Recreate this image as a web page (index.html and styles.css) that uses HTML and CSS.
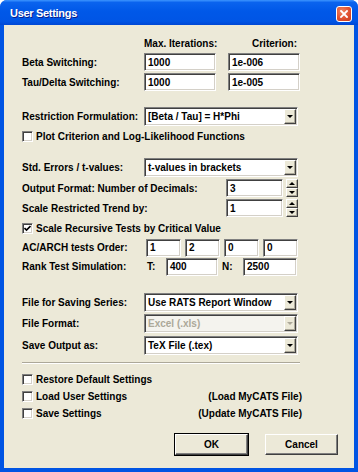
FILE: index.html
```html
<!DOCTYPE html>
<html lang="en">
<head>
    <meta charset="UTF-8">
    <meta name="viewport" content="width=device-width, initial-scale=1.0">
    <title>User Settings</title>
    <link rel="stylesheet" href="styles.css">
</head>
<body>
    <div class="window">
        <div class="titlebar">
            <span class="title">User Settings</span>
            <span class="close">
                <svg width="8" height="8" viewBox="0 0 8 8"><path d="M1 1L7 7M7 1L1 7" stroke="#fff" stroke-width="1.8" stroke-linecap="square"/></svg>
            </span>
        </div>

        <div class="client">
            <div class="row head">
                <span class="label"></span>
                <span class="head-col">Max. Iterations:</span>
                <span class="head-col second">Criterion:</span>
            </div>
            <div class="row">
                <span class="label">Beta Switching:</span>
                <span class="field w72">1000</span>
                <span class="field w72 second">1e-006</span>
            </div>
            <div class="row">
                <span class="label">Tau/Delta Switching:</span>
                <span class="field w72">1000</span>
                <span class="field w72 second">1e-005</span>
            </div>

            <div class="row gap-14">
                <span class="label">Restriction Formulation:</span>
                <span class="combo"><span class="combo-text">[Beta / Tau] = H*Phi</span><span class="combo-btn"><i class="arrow-down"></i></span></span>
            </div>
            <div class="row">
                <span class="check"></span>
                <span>Plot Criterion and Log-Likelihood Functions</span>
            </div>

            <div class="row gap-11">
                <span class="label">Std. Errors / t-values:</span>
                <span class="combo"><span class="combo-text">t-values in brackets</span><span class="combo-btn"><i class="arrow-down"></i></span></span>
            </div>
            <div class="row gap-1">
                <span class="label wide">Output Format: Number of Decimals:</span>
                <span class="field w57">3</span>
                <span class="spin"><span class="spin-btn"><i class="arrow-up"></i></span><span class="spin-btn"><i class="arrow-down"></i></span></span>
            </div>
            <div class="row">
                <span class="label wide">Scale Restricted Trend by:</span>
                <span class="field w57">1</span>
                <span class="spin"><span class="spin-btn"><i class="arrow-up"></i></span><span class="spin-btn"><i class="arrow-down"></i></span></span>
            </div>
            <div class="row short gap-1">
                <span class="check checked">
                    <svg width="7" height="7" viewBox="0 0 7 7"><path d="M0.5 3L2.5 5L6.5 1" fill="none" stroke="#000" stroke-width="1.6"/></svg>
                </span>
                <span>Scale Recursive Tests by Critical Value</span>
            </div>
            <div class="row short">
                <span class="label ac">AC/ARCH tests Order:</span>
                <span class="order">
                    <span class="field w35">1</span>
                    <span class="field w35">2</span>
                    <span class="field w35">0</span>
                    <span class="field w35">0</span>
                </span>
            </div>
            <div class="row short">
                <span class="label rank">Rank Test Simulation:</span>
                <span class="sim-t">T:</span>
                <span class="field w52">400</span>
                <span class="sim-n">N:</span>
                <span class="field w54">2500</span>
            </div>

            <div class="row gap-16">
                <span class="label">File for Saving Series:</span>
                <span class="combo"><span class="combo-text">Use RATS Report Window</span><span class="combo-btn"><i class="arrow-down"></i></span></span>
            </div>
            <div class="row gap-1">
                <span class="label">File Format:</span>
                <span class="combo disabled"><span class="combo-text">Excel (.xls)</span><span class="combo-btn"><i class="arrow-down"></i></span></span>
            </div>
            <div class="row gap-2">
                <span class="label">Save Output as:</span>
                <span class="combo"><span class="combo-text">TeX File (.tex)</span><span class="combo-btn"><i class="arrow-down"></i></span></span>
            </div>

            <div class="separator"></div>

            <div class="row option first">
                <span class="check"></span>
                <span>Restore Default Settings</span>
            </div>
            <div class="row option">
                <span class="check"></span>
                <span>Load User Settings</span>
                <span class="aside">(Load MyCATS File)</span>
            </div>
            <div class="row option">
                <span class="check"></span>
                <span>Save Settings</span>
                <span class="aside">(Update MyCATS File)</span>
            </div>

            <div class="buttons">
                <span class="button default">OK</span>
                <span class="button">Cancel</span>
            </div>
        </div>
    </div>
</body>
</html>
```

FILE: styles.css
```css
body {
    margin: 0;
    background: #fff;
    font-family: "Liberation Sans", Arial, sans-serif;
    font-size: 10px;
    font-weight: bold;
    color: #000;
}
.window {
    width: 358px;
    height: 472px;
    box-sizing: border-box;
    display: flex;
    flex-direction: column;
    background: #0054e3;
    border-radius: 7px 7px 0 0;
    overflow: hidden;
}
.titlebar {
    height: 25px;
    flex: none;
    display: flex;
    align-items: center;
    justify-content: space-between;
    padding: 0 6px 0 10px;
    background: linear-gradient(to bottom, #3d95ff 0%, #0a63ee 10%, #0058e8 45%, #0055e5 85%, #0048d4 100%);
}
.title {
    color: #fff;
    font-size: 11px;
    letter-spacing: -0.3px;
    text-shadow: 1px 1px #0a1e8c;
}
.close {
    width: 14px;
    height: 14px;
    margin-top: 2px;
    display: flex;
    align-items: center;
    justify-content: center;
    border: 1px solid #fff;
    border-radius: 3px;
    background: radial-gradient(circle at 35% 30%, #f0845f 0%, #e0502f 55%, #c53a1c 100%);
}
.client {
    flex: 1;
    margin: 0 4px 4px;
    padding: 10px 0 0 18px;
    background: #ece9d8;
}
.row {
    display: flex;
    align-items: center;
    height: 20px;
    white-space: nowrap;
}
.row.short {
    height: 19px;
}
.row.head {
    height: 16px;
    margin-bottom: 1px;
}
.gap-1 { margin-top: 1px; }
.gap-2 { margin-top: 2px; }
.gap-11 { margin-top: 11px; }
.gap-14 { margin-top: 14px; }
.gap-16 { margin-top: 16px; }

.label {
    width: 122px;
    flex: none;
}
.label.wide { width: 204px; }
.label.ac { width: 124px; }
.label.rank { width: 125px; }

.head-col {
    width: 72px;
    box-sizing: border-box;
    padding-right: 3px;
    text-align: right;
}
.second {
    margin-left: 12px;
}

.field {
    height: 18px;
    box-sizing: border-box;
    display: flex;
    align-items: center;
    padding: 0 3px;
    background: #fff;
    border: 1px solid;
    border-color: #808080 #fff #fff #808080;
    box-shadow: inset 1px 1px #404040, inset -1px -1px #d4d0c8;
}
.w72 { width: 72px; }
.w57 { width: 57px; }
.w35 { width: 35px; }
.w52 { width: 52px; }
.w54 { width: 54px; }

.order {
    display: flex;
    gap: 4px;
}
.sim-t {
    width: 19px;
}
.sim-n {
    width: 21px;
    margin-left: 4px;
}

.combo {
    width: 154px;
    height: 19px;
    box-sizing: border-box;
    display: flex;
    background: #fff;
    border: 1px solid;
    border-color: #808080 #fff #fff #808080;
    box-shadow: inset 1px 1px #404040, inset -1px -1px #d4d0c8;
    padding: 1px;
}
.combo-text {
    flex: 1;
    display: flex;
    align-items: center;
    padding-left: 2px;
}
.combo-btn,
.spin-btn {
    width: 12px;
    box-sizing: border-box;
    display: flex;
    align-items: center;
    justify-content: center;
    background: #ece9d8;
    border: 1px solid;
    border-color: #fff #404040 #404040 #fff;
    box-shadow: inset -1px -1px #aca899;
}
.combo.disabled {
    background: #f4f3ee;
    color: #aca899;
}
.combo.disabled .arrow-down {
    border-top-color: #aca899;
}

.spin {
    width: 12px;
    height: 18px;
    margin-left: 3px;
    display: flex;
    flex-direction: column;
}
.spin-btn {
    height: 9px;
}

.arrow-down,
.arrow-up {
    width: 0;
    height: 0;
    border-left: 3px solid transparent;
    border-right: 3px solid transparent;
}
.arrow-down {
    border-top: 3px solid #000;
}
.arrow-up {
    border-bottom: 3px solid #000;
}

.check {
    width: 11px;
    height: 11px;
    box-sizing: border-box;
    flex: none;
    margin-right: 3px;
    display: flex;
    align-items: center;
    justify-content: center;
    background: #fff;
    border: 1px solid;
    border-color: #808080 #fff #fff #808080;
    box-shadow: inset 1px 1px #404040, inset -1px -1px #d4d0c8;
}

.separator {
    width: 278px;
    margin-top: 7px;
    border-top: 1px solid #aca899;
    border-bottom: 1px solid #fff;
}

.row.option {
    height: 17px;
    width: 280px;
}
.row.option.first {
    margin-top: 7px;
}
.aside {
    margin-left: auto;
}

.buttons {
    display: flex;
    gap: 17px;
    margin-top: 12px;
    padding-left: 153px;
}
.button {
    width: 73px;
    height: 21px;
    box-sizing: border-box;
    display: flex;
    align-items: center;
    justify-content: center;
    background: #ece9d8;
    border: 1px solid;
    border-color: #fff #404040 #404040 #fff;
    box-shadow: inset -1px -1px #808080;
}
.button.default {
    outline: 1px solid #000;
}
```
